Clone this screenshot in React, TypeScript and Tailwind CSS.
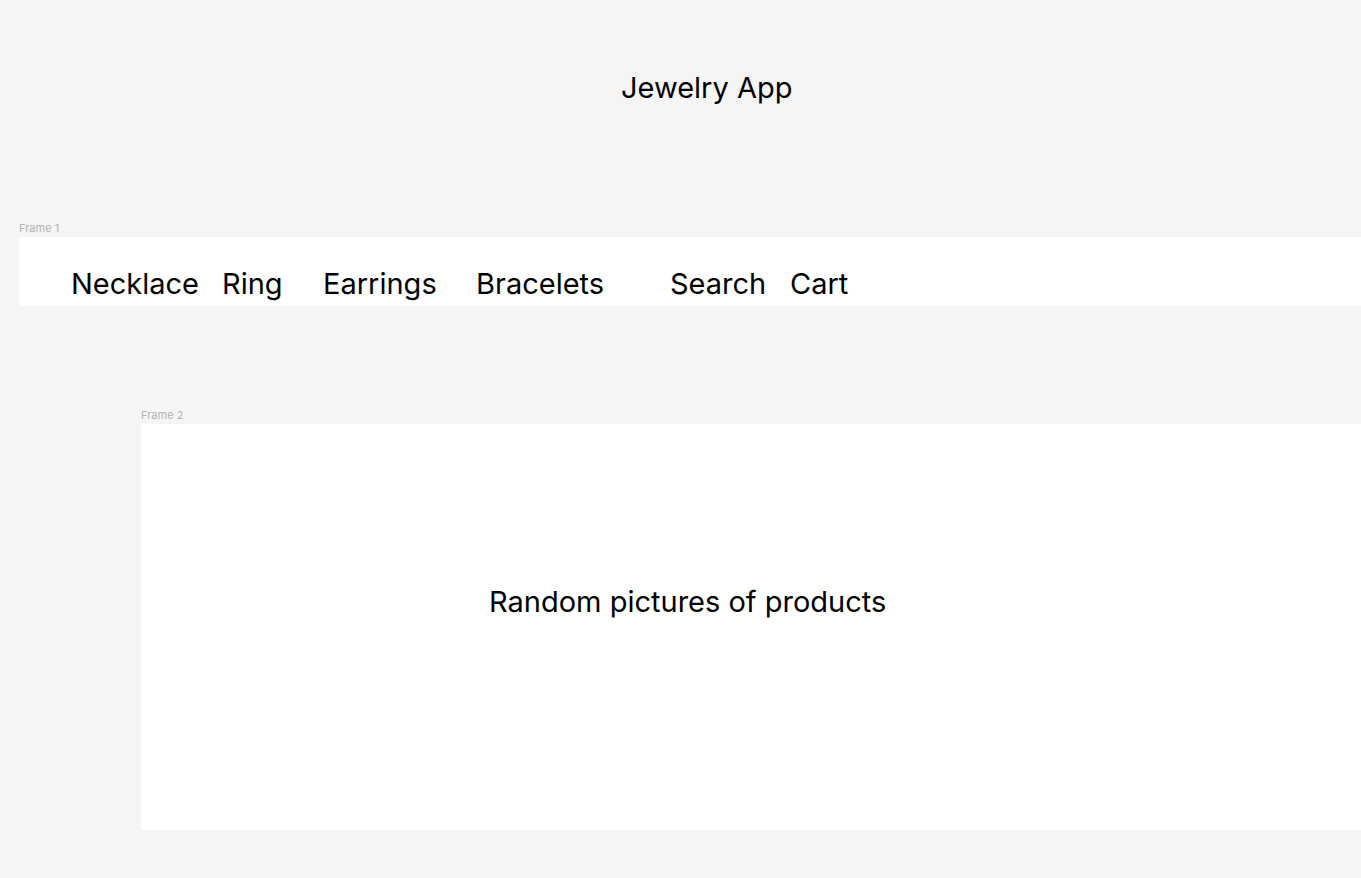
import React from 'react'

const navItems = [
  { label: 'Necklace', w: 'w-[151px]' },
  { label: 'Ring', w: 'w-[101px]' },
  { label: 'Earrings', w: 'w-[153px]' },
  { label: 'Bracelets', w: 'w-[194px]' },
  { label: 'Search', w: 'w-[120px]' },
  { label: 'Cart', w: 'w-[80px]' },
]

function FrameLabel({ children }: { children: React.ReactNode }) {
  return (
    <div className="h-[15px] text-[11px] leading-[13px] text-[#b3b3b3]">{children}</div>
  )
}

export default function App() {
  return (
    <div
      className="w-[1361px] h-[878px] overflow-hidden bg-[#f5f5f5] text-black"
      style={{ fontFamily: 'Inter, "Noto Sans", sans-serif' }}
    >
      <div className="pt-[70px] pl-[621px] text-[29px] leading-[35px]">Jewelry App</div>

      {/* Frame 1 - nav */}
      <div className="mt-[117px] ml-[19px]">
        <FrameLabel>Frame 1</FrameLabel>
        <div className="h-[69px] bg-white flex items-start pl-[52px] pt-[29px] text-[29px] leading-[35px]">
          {navItems.map((item) => (
            <span key={item.label} className={`${item.w} shrink-0`}>
              {item.label}
            </span>
          ))}
        </div>
      </div>

      {/* Frame 2 - products */}
      <div className="mt-[103px] ml-[141px]">
        <FrameLabel>Frame 2</FrameLabel>
        <div className="h-[406px] bg-white pt-[160px] pl-[348px] text-[29px] leading-[35px]">
          Random pictures of products
        </div>
      </div>
    </div>
  )
}
